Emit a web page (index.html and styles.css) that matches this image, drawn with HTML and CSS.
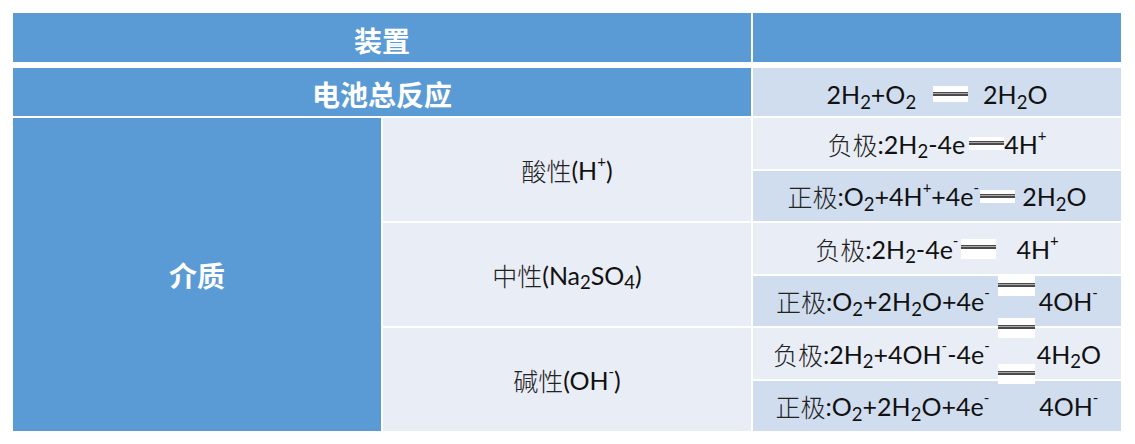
FILE: index.html
```html
<!DOCTYPE html>
<html lang="zh">
<head>
<meta charset="utf-8">
<title>氢氧燃料电池</title>
<link rel="stylesheet" href="styles.css">
</head>
<body>
<div class="table">
  <div class="cell head c12 r1">装置</div>
  <div class="cell head c3 r1"></div>

  <div class="cell blue c12 r2">电池总反应</div>
  <div class="cell dark c3 r2">2H<sub>2</sub>+O<sub>2</sub><span class="eq eq-total"></span>2H<sub>2</sub>O</div>

  <div class="cell blue c1 rmed">介质</div>

  <div class="cell light c2 racid"><span class="zh">酸性</span>(H<sup>+</sup>)</div>
  <div class="cell light c3 r3"><span class="zh">负极</span>:2H<sub>2</sub>-4e<span class="eq eq-a1"></span>4H<sup>+</sup></div>
  <div class="cell dark c3 r4"><span class="zh">正极</span>:O<sub>2</sub>+4H<sup>+</sup>+4e<sup>-</sup><span class="eq eq-a2"></span>2H<sub>2</sub>O</div>

  <div class="cell light c2 rneu"><span class="zh">中性</span>(Na<sub>2</sub>SO<sub>4</sub>)</div>
  <div class="cell light c3 r5"><span class="zh">负极</span>:2H<sub>2</sub>-4e<sup>-</sup><span class="eq eq-n1"></span>4H<sup>+</sup></div>
  <div class="cell dark c3 r6"><span class="zh">正极</span>:O<sub>2</sub>+2H<sub>2</sub>O+4e<sup>-</sup><span class="gap gap-n2"></span>4OH<sup>-</sup></div>

  <div class="cell light c2 rbase"><span class="zh">碱性</span>(OH<sup>-</sup>)</div>
  <div class="cell light c3 r7"><span class="zh">负极</span>:2H<sub>2</sub>+4OH<sup>-</sup>-4e<sup>-</sup><span class="gap gap-b1"></span>4H<sub>2</sub>O</div>
  <div class="cell dark c3 r8"><span class="zh">正极</span>:O<sub>2</sub>+2H<sub>2</sub>O+4e<sup>-</sup><span class="gap gap-b2"></span>4OH<sup>-</sup></div>

  <span class="eq eq-float f1"></span>
  <span class="eq eq-float f2"></span>
  <span class="eq eq-float f3"></span>
</div>
</body>
</html>
```

FILE: styles.css
```css
html, body {
  margin: 0;
  padding: 0;
  background: #ffffff;
}

.table {
  position: relative;
  margin: 13px;
  display: grid;
  grid-template-columns: 368px 368px 368px;
  grid-template-rows: 53px 48px 51px 50px 51px 50px 51px 50px;
  column-gap: 2px;
  row-gap: 2px;
  width: 1108px;
  font-family: "Lato", "Noto Sans CJK SC", sans-serif;
  font-size: 25px;
  color: #111111;
}

.cell {
  display: flex;
  align-items: center;
  justify-content: center;
  white-space: nowrap;
  box-sizing: border-box;
}

.zh {
  font-family: "Noto Sans CJK SC", sans-serif;
  font-weight: 300;
  color: #222222;
}

.head {
  background: #5b9bd5;
  background-clip: padding-box;
  border-bottom: 4px solid #ffffff;
  color: #ffffff;
  font-family: "Noto Sans CJK SC", sans-serif;
  font-weight: 700;
  font-size: 28px;
  padding-top: 4px;
}

.blue {
  background: #5b9bd5;
  color: #ffffff;
  font-family: "Noto Sans CJK SC", sans-serif;
  font-weight: 700;
  font-size: 28px;
}

.light { background: #e9edf6; }
.dark  { background: #d0ddef; }

.c1  { grid-column: 1; }
.c2  { grid-column: 2; }
.c3  { grid-column: 3; }
.c12 { grid-column: 1 / span 2; }

.r1 { grid-row: 1; }
.r2 { grid-row: 2; padding-top: 4px; }
.r3 { grid-row: 3; }
.r4 { grid-row: 4; }
.r5 { grid-row: 5; }
.r6 { grid-row: 6; }
.r7 { grid-row: 7; }
.r8 { grid-row: 8; }
.rmed  { grid-row: 3 / span 6; }
.racid { grid-row: 3 / span 2; }
.rneu  { grid-row: 5 / span 2; }
.rbase { grid-row: 7 / span 2; }

sub, sup {
  line-height: 0;
  position: relative;
  vertical-align: baseline;
}
sub { font-size: 0.74em; top: 0.42em; }
sup { font-size: 0.6em; top: -0.6em; }

.eq {
  display: inline-block;
  width: 35px;
  height: 13px;
  vertical-align: 0.2em;
  background: linear-gradient(to bottom,
    #ffffff 0 4px,
    #4b4b4b 4px 5.5px,
    #a9a9a9 5.5px 6.5px,
    #4b4b4b 6.5px 8px,
    #ffffff 8px 100%);
}

.eq-total { margin: 0 15px 0 17px; height: 16px; vertical-align: 0.1em;
  background: linear-gradient(to bottom,
    #ffffff 0 6px,
    #4b4b4b 6px 7.5px,
    #a9a9a9 7.5px 8.5px,
    #4b4b4b 8.5px 10px,
    #ffffff 10px 100%); }
.eq-a1 { margin: 0 0 0 4px; }
.eq-a2 { margin: 0 7px 0 1px; }
.eq-n1 { margin: 0 20px 0 3px; height: 20px; vertical-align: 0.35em;
  background: linear-gradient(to bottom,
    #ffffff 0 6px,
    #4b4b4b 6px 7.5px,
    #a9a9a9 7.5px 8.5px,
    #4b4b4b 8.5px 10px,
    #ffffff 10px 100%); }

.gap { display: inline-block; }
.gap-n2 { width: 49px; }
.gap-b1 { width: 47px; }
.gap-b2 { width: 50px; }

.eq-float {
  position: absolute;
  left: 985px;
  width: 37px;
  height: 20px;
  background: linear-gradient(to bottom,
    #ffffff 0 7px,
    #4b4b4b 7px 8.5px,
    #a9a9a9 8.5px 9.5px,
    #4b4b4b 9.5px 11px,
    #ffffff 11px 100%);
}
.f1 { top: 263px; }
.f2 { top: 305px; }
.f3 { top: 351px; }
```
